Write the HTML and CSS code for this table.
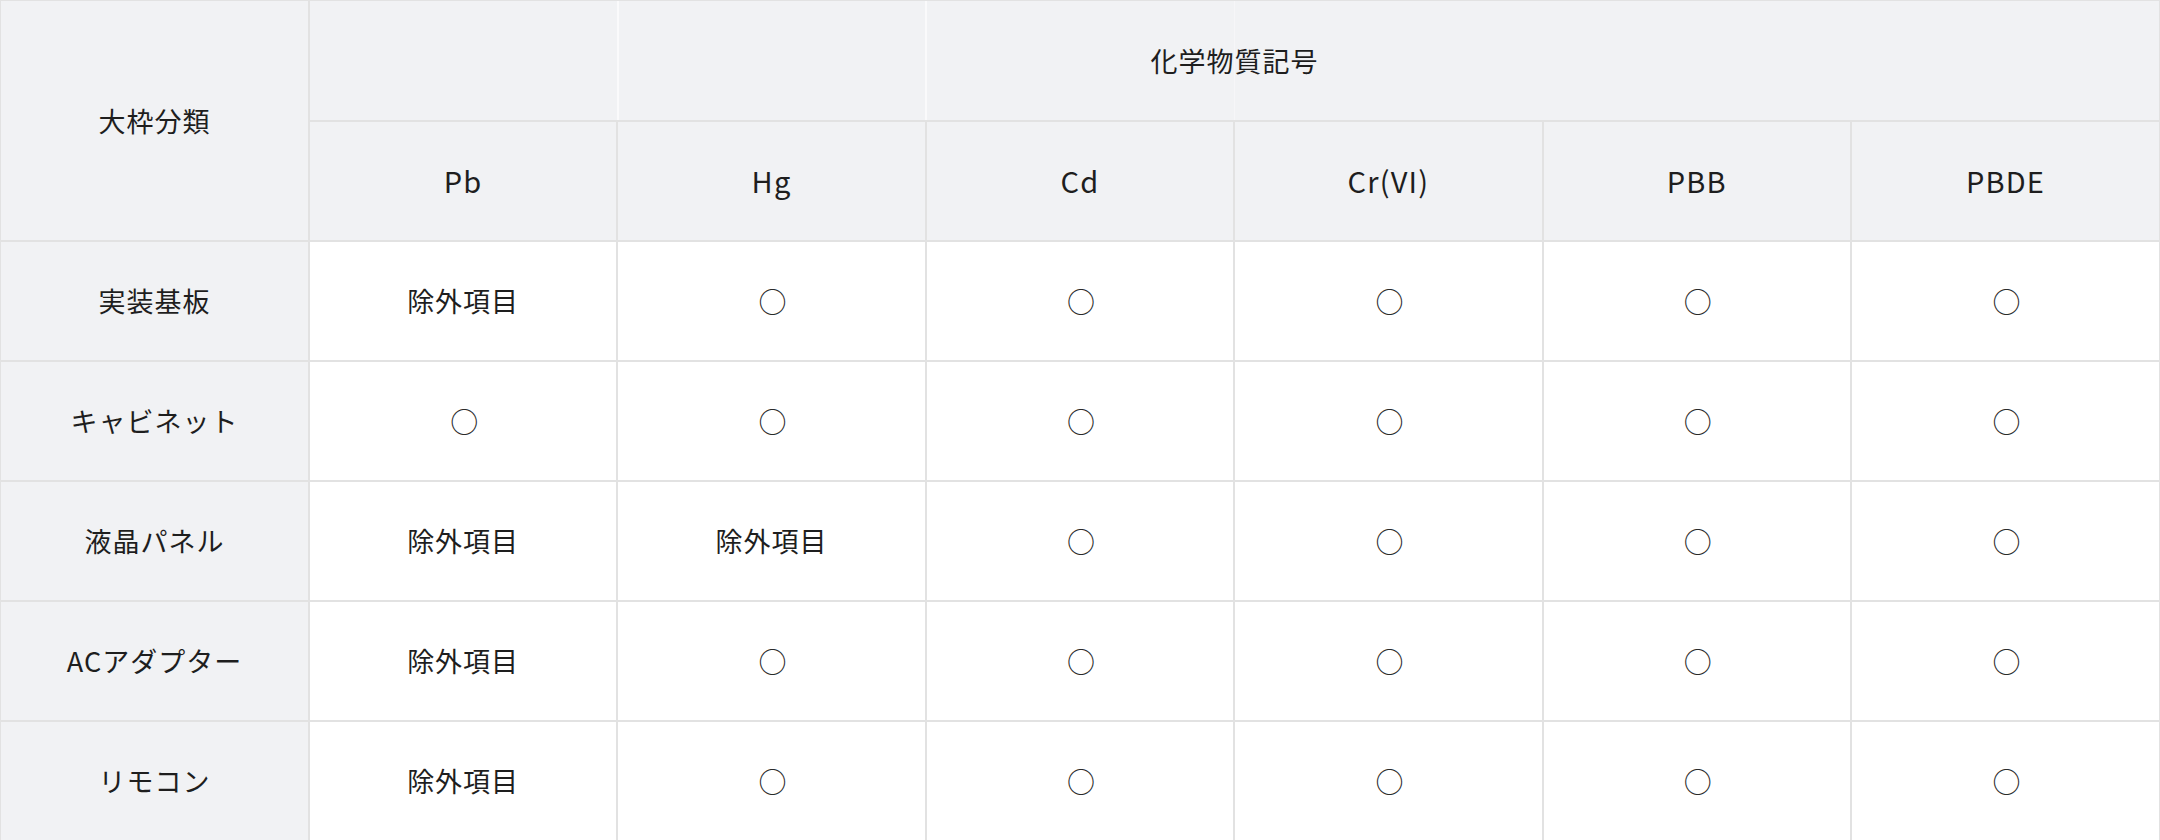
FILE: index.html
```html
<!DOCTYPE html>
<html lang="ja">
<head>
<meta charset="utf-8">
<title>化学物質表</title>
<link rel="stylesheet" href="styles.css">
</head>
<body>
<table class="rohs">
  <colgroup>
    <col><col><col><col><col><col><col>
  </colgroup>
  <thead>
    <tr>
      <th class="head" rowspan="2">大枠分類</th>
      <th class="head group" colspan="6">化学物質記号</th>
    </tr>
    <tr>
      <th class="head latin">Pb</th>
      <th class="head latin">Hg</th>
      <th class="head latin">Cd</th>
      <th class="head latin">Cr(VI)</th>
      <th class="head latin">PBB</th>
      <th class="head latin">PBDE</th>
    </tr>
  </thead>
  <tbody>
    <tr>
      <th class="head">実装基板</th>
      <td>除外項目</td><td class="mark">○</td><td class="mark">○</td><td class="mark">○</td><td class="mark">○</td><td class="mark">○</td>
    </tr>
    <tr>
      <th class="head">キャビネット</th>
      <td class="mark">○</td><td class="mark">○</td><td class="mark">○</td><td class="mark">○</td><td class="mark">○</td><td class="mark">○</td>
    </tr>
    <tr>
      <th class="head">液晶パネル</th>
      <td>除外項目</td><td>除外項目</td><td class="mark">○</td><td class="mark">○</td><td class="mark">○</td><td class="mark">○</td>
    </tr>
    <tr>
      <th class="head">ACアダプター</th>
      <td>除外項目</td><td class="mark">○</td><td class="mark">○</td><td class="mark">○</td><td class="mark">○</td><td class="mark">○</td>
    </tr>
    <tr>
      <th class="head">リモコン</th>
      <td>除外項目</td><td class="mark">○</td><td class="mark">○</td><td class="mark">○</td><td class="mark">○</td><td class="mark">○</td>
    </tr>
  </tbody>
</table>
</body>
</html>
```

FILE: styles.css
```css
html, body {
  margin: 0;
  padding: 0;
  background: #ffffff;
}

body {
  font-family: "Noto Sans CJK JP", "Noto Sans", sans-serif;
  color: #1e1e1e;
}

.rohs {
  width: 2160px;
  border-collapse: collapse;
  table-layout: fixed;
}

.rohs tr {
  height: 120px;
}

.rohs th,
.rohs td {
  padding: 0;
  border: 2px solid #e2e2e2;
  text-align: center;
  vertical-align: middle;
  font-size: 27px;
  font-weight: 400;
  letter-spacing: 1px;
  line-height: 1;
}

.rohs tr:first-child th { border-top-width: 1px; }
.rohs tr:last-child th,
.rohs tr:last-child td { border-bottom-width: 1px; }
.rohs tr > :first-child { border-left-width: 1px; }
.rohs tr > :last-child { border-right-width: 1px; }

.rohs .head {
  background: #f1f2f4;
}

.rohs .latin {
  font-size: 29px;
  letter-spacing: 1.2px;
}

.rohs .group {
  background:
    linear-gradient(90deg,
      transparent calc(100% / 6 - 1px), #fafafb calc(100% / 6 - 1px), #fafafb calc(100% / 6 + 1px), transparent calc(100% / 6 + 1px),
      transparent calc(200% / 6 - 1px), #fafafb calc(200% / 6 - 1px), #fafafb calc(200% / 6 + 1px), transparent calc(200% / 6 + 1px),
      transparent calc(300% / 6 - 1px), #f6f6f8 calc(300% / 6 - 1px), #f6f6f8 calc(300% / 6 + 1px), transparent calc(300% / 6 + 1px)),
    #f1f2f4;
}

.rohs td {
  background: #ffffff;
}

.rohs .mark {
  font-size: 28px;
  letter-spacing: 0;
  color: #2a2a2a;
  padding-left: 2px;
}
```
